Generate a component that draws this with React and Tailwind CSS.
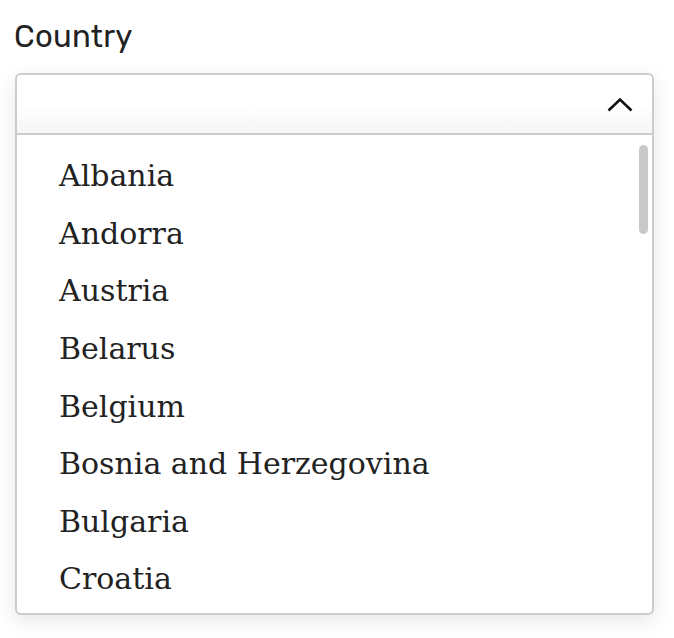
export default function App() {
  const items = [
    "Albania",
    "Andorra",
    "Austria",
    "Belarus",
    "Belgium",
    "Bosnia and Herzegovina",
    "Bulgaria",
    "Croatia",
  ];
  return (
    <div className="w-[674px] h-[638px] bg-white pl-[15px] pt-[17px] overflow-hidden">
      <div className="text-[31px] leading-[40px] text-[#222] tracking-[0.3px] -ml-[1px]" style={{ fontFamily: "Rubik, Roboto, 'Noto Sans', sans-serif" }}>
        Country
      </div>
      <div className="mt-[16px] w-[639px] border-2 border-[#cccccc] rounded-[6px] bg-white shadow-[0_6px_20px_rgba(0,0,0,0.10)] overflow-hidden">
        <div className="h-[60px] border-b-2 border-[#cccccc] bg-gradient-to-b from-white via-white to-[#f6f6f6] flex items-center justify-end pr-[19px]">
          <svg width="26" height="16" viewBox="0 0 26 16" fill="none" className="mt-[2px]">
            <path d="M1.5 13.5 L13 2.5 L24.5 13.5" stroke="#111" strokeWidth="2.6" />
          </svg>
        </div>
        <div className="relative h-[478px] pt-[12px]">
          {items.map((c) => (
            <div
              key={c}
              className="h-[57.6px] flex items-center pl-[42px] text-[30px] text-[#222]"
              style={{ fontFamily: "'DejaVu Serif', 'Liberation Serif', serif" }}
            >
              {c}
            </div>
          ))}
          <div className="absolute right-[4px] top-[10px] w-[9px] h-[89px] rounded-full bg-[#c9c9c9]" />
        </div>
      </div>
    </div>
  );
}
